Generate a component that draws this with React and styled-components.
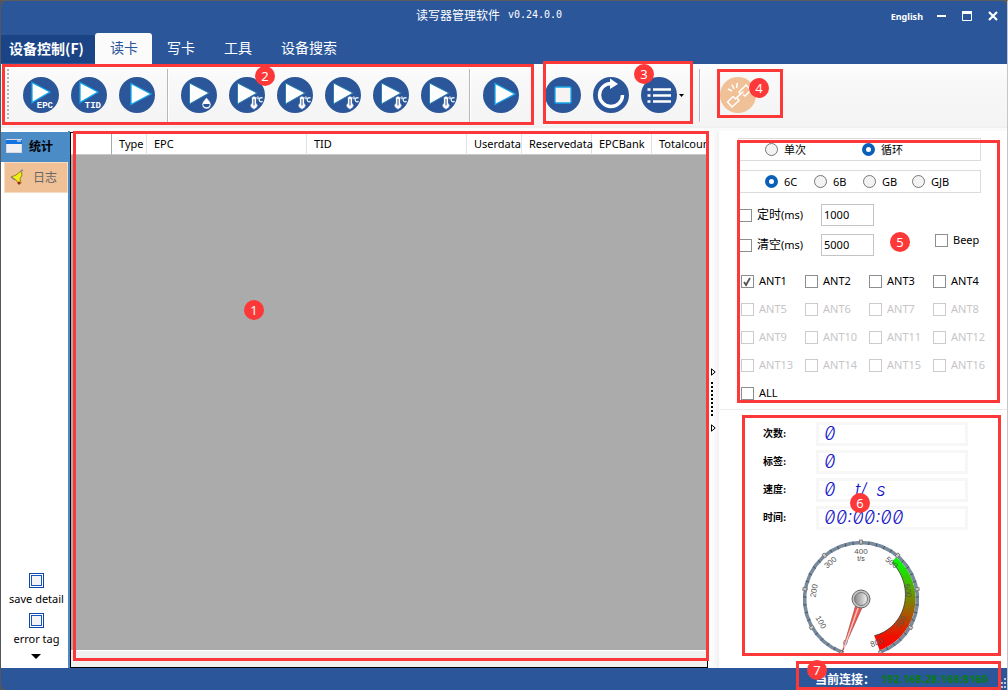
import React, { useState } from "react";
import styled, { createGlobalStyle, css } from "styled-components";

const UI = `"Noto Sans", "Noto Sans CJK SC", sans-serif`;
const CJK = `"Noto Sans CJK SC", "Noto Sans", sans-serif`;
const BLUE = "#2b579a";
const RED = "#fd3838";

const Global = createGlobalStyle`
  *, *::before, *::after { box-sizing: border-box; }
  html, body, #root { margin: 0; height: 100%; }
  body { background: #54565a; font: 11px/16px ${UI}; color: #000; overflow: hidden; }
  button, input { font: inherit; color: inherit; margin: 0; padding: 0; }
  button { border: 0; background: none; }
`;

const Window = styled.div`
  display: flex;
  flex-direction: column;
  height: 100vh;
  border-top: 1px solid #5b5c5e;
  border-left: 1px solid #54565a;
  border-right: 1px solid #c4c6c8;
`;

/* Numbered red call-outs over the window */
const Outline = styled.div`
  position: absolute;
  top: ${(p) => p.$t}px;
  right: ${(p) => p.$r}px;
  bottom: ${(p) => p.$b}px;
  left: ${(p) => p.$l}px;
  border: 3px solid ${RED};
  pointer-events: none;
  z-index: 2;
`;
const Badge = styled.span`
  position: absolute;
  top: ${(p) => p.$y}px;
  left: ${(p) => p.$x}px;
  width: 20px;
  height: 20px;
  border-radius: 50%;
  background: ${RED};
  color: #fff;
  font: 400 13px/20px ${UI};
  text-align: center;
  pointer-events: none;
  z-index: 3;
`;

/* Title bar */
const Header = styled.header`
  flex: none;
  background: ${BLUE};
  color: #fff;
  border-radius: 6px 6px 0 0;
`;
const TitleRow = styled.div`
  display: grid;
  grid-template-columns: 1fr auto 1fr;
  align-items: center;
  height: 30px;
  padding-right: 30px;
`;
const Title = styled.h1`
  grid-column: 2;
  display: flex;
  gap: 8px;
  margin: 0;
  padding-bottom: 2px;
  font: 400 12px/20px ${CJK};
`;
const Version = styled.span`
  font: 10px/20px "DejaVu Sans Mono", monospace;
`;
const Controls = styled.div`
  justify-self: end;
  display: flex;
  align-items: center;
  gap: 10px;
  margin-right: -24px;
`;
const Language = styled.button`
  font-size: 9px;
  line-height: 20px;
  font-weight: 700;
  padding-top: 2px;
`;
const ControlButton = styled.button`
  display: flex;
  align-items: center;
  justify-content: center;
  width: 16px;
  height: 20px;
`;
const Tabs = styled.nav`
  display: flex;
  align-items: center;
  height: 33px;
  padding-top: 2px;
`;
const MenuButton = styled.button`
  width: 94px;
  height: 28px;
  padding: 0 3px 2px 0;
  background: #1a4486;
  font: 700 14px/26px ${CJK};
`;
const Tab = styled.button`
  height: 31px;
  padding: 0 14px 3px 15px;
  border-radius: 3px 3px 0 0;
  font: 400 14px/26px ${CJK};
  ${(p) => p.$active && css`background: #fbfbfb; color: ${BLUE};`}
`;

/* Toolbar */
const Toolbar = styled.div`
  flex: none;
  display: flex;
  height: 62px;
  background: linear-gradient(#fdfdfd, #f8f8f8 30%, #f4f4f4);
`;
const ToolGroup = styled.div`
  position: relative;
  display: flex;
  align-items: center;
  gap: 12px;
  margin-left: ${(p) => p.$gap || 0}px;
`;
const Grip = styled.span`
  width: 2px;
  height: 52px;
  margin-left: 6px;
  margin-right: 2px;
  background: repeating-linear-gradient(#b5b5b5 0 2px, transparent 2px 4px);
`;
const Divider = styled.span`
  width: 2px;
  height: 53px;
  border-left: 1px solid #b8b8b8;
  border-right: 1px solid #fff;
`;
const ToolButton = styled.button`
  flex: none;
  display: block;
  width: 36px;
  height: 36px;
  border-radius: 50%;
  background: ${(p) => (p.$off ? "#f0c197" : BLUE)};
  svg { display: block; }
`;
const CaretButton = styled.button`
  display: flex;
  width: 6px;
  height: 36px;
  margin-left: -10px;
  align-items: center;
`;
const Strip = styled.div`
  flex: none;
  height: 5px;
  background: linear-gradient(#f0f0f0 40%, #fafafa 40%);
`;

/* Body */
const Body = styled.main`
  flex: 1;
  min-height: 0;
  display: flex;
  background: #fff;
`;
const Sidebar = styled.aside`
  flex: none;
  display: flex;
  flex-direction: column;
  justify-content: space-between;
  width: 69px;
  padding-top: 1px;
  border-right: 2px solid #4b8bc6;
`;
const SideTabs = styled.div`
  display: flex;
  flex-direction: column;
`;
const SideTab = styled.button`
  display: flex;
  align-items: center;
  gap: 7px;
  height: 30px;
  padding: 0 0 2px 5px;
  background: #4b8bc6;
  font: 700 12px/18px ${CJK};
  ${(p) => p.$log && css`
    height: 31px;
    margin-left: 3px;
    gap: 7px;
    background: #f0c197;
    border: 1px solid #f7dcc4;
    color: #666;
    font-weight: 400;
  `}
`;
const SideOptions = styled.div`
  display: flex;
  flex-direction: column;
  align-items: center;
  padding-left: 4px;
  padding-bottom: 8px;
`;
const SideOption = styled.label`
  display: flex;
  flex-direction: column;
  align-items: center;
  gap: 3px;
  height: 40px;
  margin-top: -1px;
  margin-bottom: 1px;
`;
const BlueCheck = styled.input.attrs({ type: "checkbox" })`
  appearance: none;
  width: 15px;
  height: 15px;
  margin: 0;
  border: 1px solid #0b47a8;
  background: #f4f4f4;
  box-shadow: inset 0 0 0 1px #fff, inset 0 0 0 2px #1557c0;
`;
const MoreButton = styled.button`
  display: flex;
  width: 12px;
  height: 6px;
  padding-right: 2px;
`;

const GridArea = styled.section`
  position: relative;
  flex: 1;
  min-width: 0;
  padding-top: 1px;
`;
const GridFrame = styled.div`
  display: flex;
  flex-direction: column;
  height: 100%;
  overflow: hidden;
  border: 1px solid #000;
  background: #ababab;
`;
const Table = styled.table`
  table-layout: fixed;
  width: 0;
  border-collapse: separate;
  border-spacing: 0;
`;
const Th = styled.th`
  width: ${(p) => p.$w}px;
  height: 22px;
  padding: 0 0 0 7px;
  background: #fff;
  border-right: 1px solid ${(p) => p.$line || "#e2e2e2"};
  border-bottom: 1px solid #c8c8c8;
  font-weight: 400;
  text-align: left;
  white-space: nowrap;
`;
const ScrollTrack = styled.div`
  height: 17px;
  margin-top: auto;
  background: #f0f0f0;
  border-top: 1px solid #fff;
`;

const Splitter = styled.div`
  flex: none;
  display: flex;
  flex-direction: column;
  align-items: flex-start;
  justify-content: center;
  gap: 6px;
  width: 11px;
  padding-left: 3px;
  background: linear-gradient(90deg, #fff 30%, #f1f1f1);
`;
const Dots = styled.span`
  width: 2px;
  height: 36px;
  background: repeating-linear-gradient(#000 0 2px, transparent 2px 4px);
`;

const RightPane = styled.aside`
  flex: none;
  display: flex;
  flex-direction: column;
  width: 288px;
`;
const Settings = styled.form`
  position: relative;
  height: 279px;
  padding: 7px 0 0 19px;
  border-bottom: 1px solid #ececec;
`;
const RadioBox = styled.div`
  display: flex;
  align-items: center;
  width: 243px;
  height: 23px;
  margin-bottom: ${(p) => p.$gap}px;
  padding-left: 26px;
  border: 1px solid #dcdcdc;
`;
const RadioLabel = styled.label`
  display: flex;
  align-items: center;
  gap: 6px;
  width: ${(p) => p.$w}px;
`;
const Radio = styled.input.attrs({ type: "radio" })`
  appearance: none;
  width: 13px;
  height: 13px;
  border: 1px solid #777;
  border-radius: 50%;
  background: #f3f3f3;
  &:checked { border: 4px solid #0a5fb8; background: #fff; }
`;
const TimerRow = styled.div`
  display: flex;
  align-items: center;
  height: 30px;
  margin-left: 1px;
`;
const TickLabel = styled.label`
  display: flex;
  align-items: center;
  gap: 5px;
  width: ${(p) => p.$w}px;
  color: ${(p) => (p.$off ? "#c6c6c6" : "#000")};
`;
const Han = styled.span`
  font-size: 12px;
`;
const Tick = styled.input.attrs({ type: "checkbox" })`
  appearance: none;
  flex: none;
  width: 13px;
  height: 13px;
  border: 1px solid #8e8e8e;
  background: #fff;
  &:disabled { border-color: #cbcbcb; }
  &:checked {
    background: #fff url("data:image/svg+xml,%3Csvg xmlns='http://www.w3.org/2000/svg' viewBox='0 0 11 11'%3E%3Cpath d='M2 6l2 3 4-7' fill='none' stroke='%23555' stroke-width='1.8'/%3E%3C/svg%3E");
  }
`;
const NumberBox = styled.input`
  width: 53px;
  height: 22px;
  padding: 0 2px 2px;
  border: 1px solid #c4c4c4;
`;
const BeepSlot = styled.div`
  margin-left: 61px;
  height: 26px;
`;
const Antennas = styled.div`
  display: grid;
  grid-template-columns: repeat(4, 64px);
  grid-auto-rows: 28px;
  align-items: center;
  margin: 7px 0 0 3px;
`;

const Stats = styled.section`
  position: relative;
  flex: 1;
  min-height: 0;
  padding: 12px 0 0 44px;
`;
const Reading = styled.div`
  display: flex;
  align-items: center;
  height: 24px;
  margin-bottom: 4px;
`;
const ReadingName = styled.span`
  width: 53px;
  font: 600 10px/16px "Liberation Serif", "Noto Sans CJK SC", serif;
`;
const ReadingValue = styled.output`
  width: 152px;
  height: 24px;
  padding-left: 5px;
  border: 3px solid #f7f7f7;
  color: #1414c8;
  font: italic 300 18px/18px Inter, sans-serif;
  font-feature-settings: "zero", "tnum";
  white-space: pre;
`;
const GaugeSvg = styled.svg`
  display: block;
  margin: 9px 0 0 38px;
`;

const StatusBar = styled.footer`
  flex: none;
  display: flex;
  justify-content: flex-end;
  height: 22px;
  background: ${BLUE};
  border-radius: 0 0 0 6px;
`;
const Connection = styled.div`
  position: relative;
  display: flex;
  align-items: center;
  width: 205px;
  padding-left: 19px;
  color: #fff;
  font: 700 12px/20px ${CJK};
`;
const Address = styled.span`
  margin-left: 6px;
  color: #087a14;
  font: 700 11px/20px ${UI};
`;

const Circle = ({ label, off, children }) => (
  <ToolButton type="button" aria-label={label} $off={off}>
    <svg width="36" height="36" viewBox="0 0 36 36">{children}</svg>
  </ToolButton>
);

const PlayTagged = ({ tag }) => (
  <Circle label={`Read ${tag}`}>
    <path d="M9 5.5v20L27 15z" fill="#fff" stroke="#14a5e8" strokeWidth="1.3" />
    <text x="30" y="31" fill="#fff" fontSize="9" fontWeight="700" textAnchor="end" fontFamily="Liberation Mono, monospace">{tag}</text>
  </Circle>
);

const Play = () => (
  <Circle label="Read">
    <path d="M12 6.5v21L32 17z" fill="#fff" stroke="#14a5e8" strokeWidth="1.3" />
  </Circle>
);

const PlayMoisture = () => (
  <Circle label="Read moisture">
    <path d="M8.5 6v21L28 16z" fill="#fff" stroke="#2a7fae" strokeWidth="1" />
    <path d="M25.5 20.500c-2.500 3-4.500 4.800-4.500 7a4.500 4.500 0 0 0 9 0c0-2.200-2-4-4.500-7z" fill="#fff" stroke={BLUE} strokeWidth=".6" />
    <path d="M22.300 27h6.400a3.200 3.200 0 0 1-6.400 0z" fill={BLUE} />
  </Circle>
);

const PlayTemperature = () => (
  <Circle label="Read temperature">
    <path d="M8.500 6v21L28 16z" fill="#fff" stroke="#2a7fae" strokeWidth="1" />
    <path d="M22.500 26v-4.500a2.500 2.500 0 0 1 5 0V26a3.600 3.600 0 1 1-5 0z" fill="#fff" stroke={BLUE} strokeWidth=".8" />
    <path d="M25 22v6.500" stroke={BLUE} strokeWidth="1" />
    <circle cx="28.800" cy="20.800" r="1" fill="none" stroke="#fff" strokeWidth=".9" />
    <path d="M33.500 21.300a2 2 0 1 0 0 3" fill="none" stroke="#fff" strokeWidth="1.200" />
  </Circle>
);

/* Speed dial: 0 to 800 over 320 degrees, starting at the lower left */
const C = 60;
const polar = (r, deg) => {
  const a = (deg * Math.PI) / 180;
  return [C + r * Math.cos(a), C + r * Math.sin(a)];
};
const angleOf = (v) => 110 + v * 0.4;
const arc = (r0, r1, from, to) => {
  const pts = [];
  for (let i = 0; i <= 30; i++) {
    const t = i / 30;
    pts.push(polar(r0 + (r1 - r0) * t, from + (to - from) * t).map((n) => n.toFixed(2)).join(" "));
  }
  return pts;
};

function Gauge() {
  const outer = arc(54.5, 54.5, 310, 430);
  const inner = arc(48, 39, 310, 430).reverse();
  const minor = Array.from({ length: 41 }, (_, i) => 110 + i * 8);
  const major = Array.from({ length: 9 }, (_, i) => i * 100);
  const ring = arc(56.5, 56.5, 110, 430);
  return (
    <GaugeSvg width="120" height="118" viewBox="0 0 120 118" role="img" aria-label="Tags per second">
      <defs>
        <linearGradient id="band" x1="0" y1="0" x2="0" y2="1">
          <stop offset="0" stopColor="#00ff00" />
          <stop offset="0.1" stopColor="#10ee00" />
          <stop offset="0.85" stopColor="#f01000" />
          <stop offset="1" stopColor="#ff0000" />
        </linearGradient>
        <linearGradient id="hub">
          <stop offset="0" stopColor="#888" />
          <stop offset="1" stopColor="#f2f2f2" />
        </linearGradient>
      </defs>
      <path d={`M${ring.join("L")}`} fill="none" stroke="#778a9e" strokeWidth="3.500" />
      <path d={`M${outer.join("L")}L${inner.join("L")}z`} fill="url(#band)" />
      <path d={`M${inner.join("L")}`} fill="none" stroke="#333" strokeWidth=".8" />
      {minor.map((a) => {
        const [x1, y1] = polar(54.5, a);
        const [x2, y2] = polar(58, a);
        return <line key={a} x1={x1} y1={y1} x2={x2} y2={y2} stroke="#4b5560" strokeWidth="1" />;
      })}
      {major.map((v) => {
        const a = angleOf(v);
        const [x, y] = polar(57, a);
        const [tx, ty] = polar(47, a);
        const turn = (a + 90) % 360;
        const upright = turn > 90 && turn < 270 ? turn - 180 : turn;
        return (
          <g key={v}>
            <rect x={x - 2} y={y - 1.5} width="4" height="3" fill="#c8c8c8" stroke="#666" strokeWidth=".7" transform={`rotate(${a} ${x} ${y})`} />
            <text x={tx} y={ty + 2} transform={`rotate(${upright} ${tx} ${ty})`} fontSize="8" textAnchor="middle" fill="#555" fontFamily="Liberation Sans, sans-serif">{v}</text>
          </g>
        );
      })}
      <text x="60" y="22" fontSize="7" textAnchor="middle" fill="#444" fontFamily="Liberation Sans, sans-serif">t/s</text>
      <path d="M56.500 60L41 113.500L64 62z" fill="#f4564f" stroke="#8a4040" strokeWidth=".6" />
      <path d="M59.500 62L43 109" stroke="#ffc4c0" strokeWidth="1.400" />
      <circle cx="60" cy="60" r="9" fill="#c4c4c4" stroke="#666" strokeWidth="1" />
      <circle cx="60" cy="60" r="6.500" fill="url(#hub)" stroke="#777" strokeWidth="1" />
    </GaugeSvg>
  );
}

const columns = [
  ["", 41, "#a8a8a8"], ["Type", 35], ["EPC", 160], ["TID", 160],
  ["Userdata", 55], ["Reservedata", 70], ["EPCBank", 60], ["Totalcount", 100],
];
const readings = [["次数:", "0"], ["标签:", "0"], ["速度:", "0    t/  s"], ["时间:", "00:00:00"]];

const SplitArrow = () => (
  <svg width="5" height="8" viewBox="0 0 5 8"><path d="M.5 .8v6.400L4.200 4z" fill="#fff" stroke="#000" /></svg>
);

export default function App() {
  const [loop, setLoop] = useState("循环");
  const [protocol, setProtocol] = useState("6C");
  return (
    <>
      <Global />
      <Window>
        <Header>
          <TitleRow>
            <Title>读写器管理软件 <Version>v0.24.0.0</Version></Title>
            <Controls>
              <Language type="button">English</Language>
              <ControlButton type="button" aria-label="Minimize">
                <svg width="10" height="10"><path d="M1 5h9" stroke="#fff" strokeWidth="2" /></svg>
              </ControlButton>
              <ControlButton type="button" aria-label="Maximize">
                <svg width="10" height="10"><path d="M.5 1v8.500h9V1" fill="none" stroke="#fff" /><path d="M0 1.500h10" stroke="#fff" strokeWidth="3" /></svg>
              </ControlButton>
              <ControlButton type="button" aria-label="Close">
                <svg width="10" height="10"><path d="M1 1l8 8M9 1L1 9" stroke="#fff" strokeWidth="2.200" /></svg>
              </ControlButton>
            </Controls>
          </TitleRow>
          <Tabs>
            <MenuButton type="button">设备控制(F)</MenuButton>
            <Tab type="button" $active>读卡</Tab>
            <Tab type="button">写卡</Tab>
            <Tab type="button">工具</Tab>
            <Tab type="button">设备搜索</Tab>
          </Tabs>
        </Header>

        <Toolbar>
          <ToolGroup>
            <Grip />
            <PlayTagged tag="EPC" />
            <PlayTagged tag="TID" />
            <Play />
            <Divider />
            <PlayMoisture />
            <PlayTemperature />
            <PlayTemperature />
            <PlayTemperature />
            <PlayTemperature />
            <PlayTemperature />
            <Divider />
            <Play />
            <Outline $t={0} $r={-15} $b={1} $l={1} />
            <Badge $x={254} $y={2}>2</Badge>
          </ToolGroup>
          <ToolGroup $gap={26}>
            <Circle label="Stop">
              <rect x="10" y="10" width="16" height="16" rx="1" fill="#f7f3f3" stroke="#14a5e8" strokeWidth="1.300" />
            </Circle>
            <Circle label="Refresh">
              <path d="M18 6.500a11.500 11.500 0 1 0 11.500 11.500" fill="none" stroke="#fff" strokeWidth="3.400" />
              <path d="M17 1.500v10.500l8-5z" fill="#fff" />
            </Circle>
            <Circle label="List">
              <path d="M12 12.500h18M12 18.500h18M12 24.500h18" stroke="#fff" strokeWidth="2.400" />
              <path d="M6.500 12.500h3M6.500 18.500h3M6.500 24.500h3" stroke="#fff" strokeWidth="2.400" />
            </Circle>
            <CaretButton type="button" aria-label="More lists">
              <svg width="5" height="3"><path d="M0 0h5L2.500 3z" /></svg>
            </CaretButton>
            <Outline $t={-3} $r={-8} $b={2} $l={-2} />
            <Badge $x={89} $y={0}>3</Badge>
          </ToolGroup>
          <ToolGroup $gap={14}>
            <Divider />
          </ToolGroup>
          <ToolGroup $gap={19}>
            <Circle label="Disconnect" off>
              <g fill="none" stroke="#fff" strokeWidth="1.500">
                <path d="M13 19.500l-5.500 5.500 4.500 5 7-6.500-2-2.500M13 19.500l2.500 2" />
                <path d="M21 17.500l-2-2.500 7-7 5 5-6 6-2-1.500" />
                <path d="M14.500 22.500l9-8M8 12l4 2M12 7.500l2 4.500M17.500 6l-1 5" />
              </g>
            </Circle>
            <Outline $t={5} $r={-27} $b={8} $l={-3} />
            <Badge $x={29} $y={14}>4</Badge>
          </ToolGroup>
        </Toolbar>
        <Strip />

        <Body>
          <Sidebar>
            <SideTabs>
              <SideTab type="button">
                <svg width="16" height="16">
                  <rect x=".5" y="1.500" width="15" height="13" fill="#f1f1f4" stroke="#d4d9e4" />
                  <path d="M0 2h16v4H0z" fill="#1573e0" /><path d="M11 3h4" stroke="#fff" />
                </svg>
                统计
              </SideTab>
              <SideTab type="button" $log>
                <svg width="16" height="16">
                  <path d="M1 8l5-2 5-4 1 4-2 4 1 4-2 1-3-4-3-2z" fill="#f4ec18" stroke="#77750a" strokeWidth=".8" />
                  <path d="M11 2l2-1M1 8l4 3" stroke="#8a8a8a" strokeWidth="1.500" /><circle cx="9" cy="14" r="1.500" fill="#a02020" />
                </svg>
                日志
              </SideTab>
            </SideTabs>
            <SideOptions>
              <SideOption><BlueCheck />save detail</SideOption>
              <SideOption><BlueCheck />error tag</SideOption>
              <MoreButton type="button" aria-label="More options">
                <svg width="10" height="5"><path d="M0 0h10L5 5z" /></svg>
              </MoreButton>
            </SideOptions>
          </Sidebar>

          <GridArea>
            <GridFrame>
              <Table>
                <thead>
                  <tr>{columns.map(([name, w, line]) => <Th key={name} scope="col" $w={w} $line={line}>{name}</Th>)}</tr>
                </thead>
              </Table>
              <ScrollTrack />
            </GridFrame>
            <Outline $t={0} $r={-1} $b={7} $l={3} />
            <Badge $x={174} $y={169}>1</Badge>
          </GridArea>

          <Splitter>
            <SplitArrow />
            <Dots />
            <SplitArrow />
          </Splitter>

          <RightPane>
            <Settings>
              <RadioBox $gap={9}>
                {["单次", "循环"].map((n) => (
                  <RadioLabel key={n} $w={97}>
                    <Radio name="mode" checked={loop === n} onChange={() => setLoop(n)} />{n}
                  </RadioLabel>
                ))}
              </RadioBox>
              <RadioBox $gap={7}>
                {["6C", "6B", "GB", "GJB"].map((n) => (
                  <RadioLabel key={n} $w={49}>
                    <Radio name="protocol" checked={protocol === n} onChange={() => setProtocol(n)} />{n}
                  </RadioLabel>
                ))}
              </RadioBox>
              <TimerRow>
                <TickLabel $w={82}><Tick /><span><Han>定时</Han>(ms)</span></TickLabel>
                <NumberBox aria-label="定时(ms)" defaultValue="1000" />
              </TimerRow>
              <TimerRow>
                <TickLabel $w={82}><Tick /><span><Han>清空</Han>(ms)</span></TickLabel>
                <NumberBox aria-label="清空(ms)" defaultValue="5000" />
                <BeepSlot><TickLabel $w={60}><Tick />Beep</TickLabel></BeepSlot>
              </TimerRow>
              <Antennas>
                {Array.from({ length: 16 }, (_, i) => (
                  <TickLabel key={i} $w={64} $off={i > 3}>
                    <Tick disabled={i > 3} defaultChecked={i === 0} />ANT{i + 1}
                  </TickLabel>
                ))}
                <TickLabel $w={64}><Tick />ALL</TickLabel>
              </Antennas>
              <Outline $t={9} $r={7} $b={6} $l={18} />
              <Badge $x={171} $y={101}>5</Badge>
            </Settings>
            <Stats>
              {readings.map(([name, value]) => (
                <Reading key={name}>
                  <ReadingName>{name}</ReadingName>
                  <ReadingValue>{value}</ReadingValue>
                </Reading>
              ))}
              <Gauge />
              <Outline $t={5} $r={6} $b={12} $l={23} />
              <Badge $x={131} $y={83}>6</Badge>
            </Stats>
          </RightPane>
        </Body>

        <StatusBar>
          <Connection>
            当前连接：<Address>192.168.28.168:8160</Address>
            <Outline $t={-7} $r={0} $b={0} $l={0} />
            <Badge $x={11} $y={-8}>7</Badge>
          </Connection>
          <svg width="6" height="22" aria-hidden="true">
            <path d="M3 11h2M3 15h2M0 15h2M3 19h2M0 19h2" stroke="#b9c7de" strokeWidth="2" />
          </svg>
        </StatusBar>
      </Window>
    </>
  );
}
